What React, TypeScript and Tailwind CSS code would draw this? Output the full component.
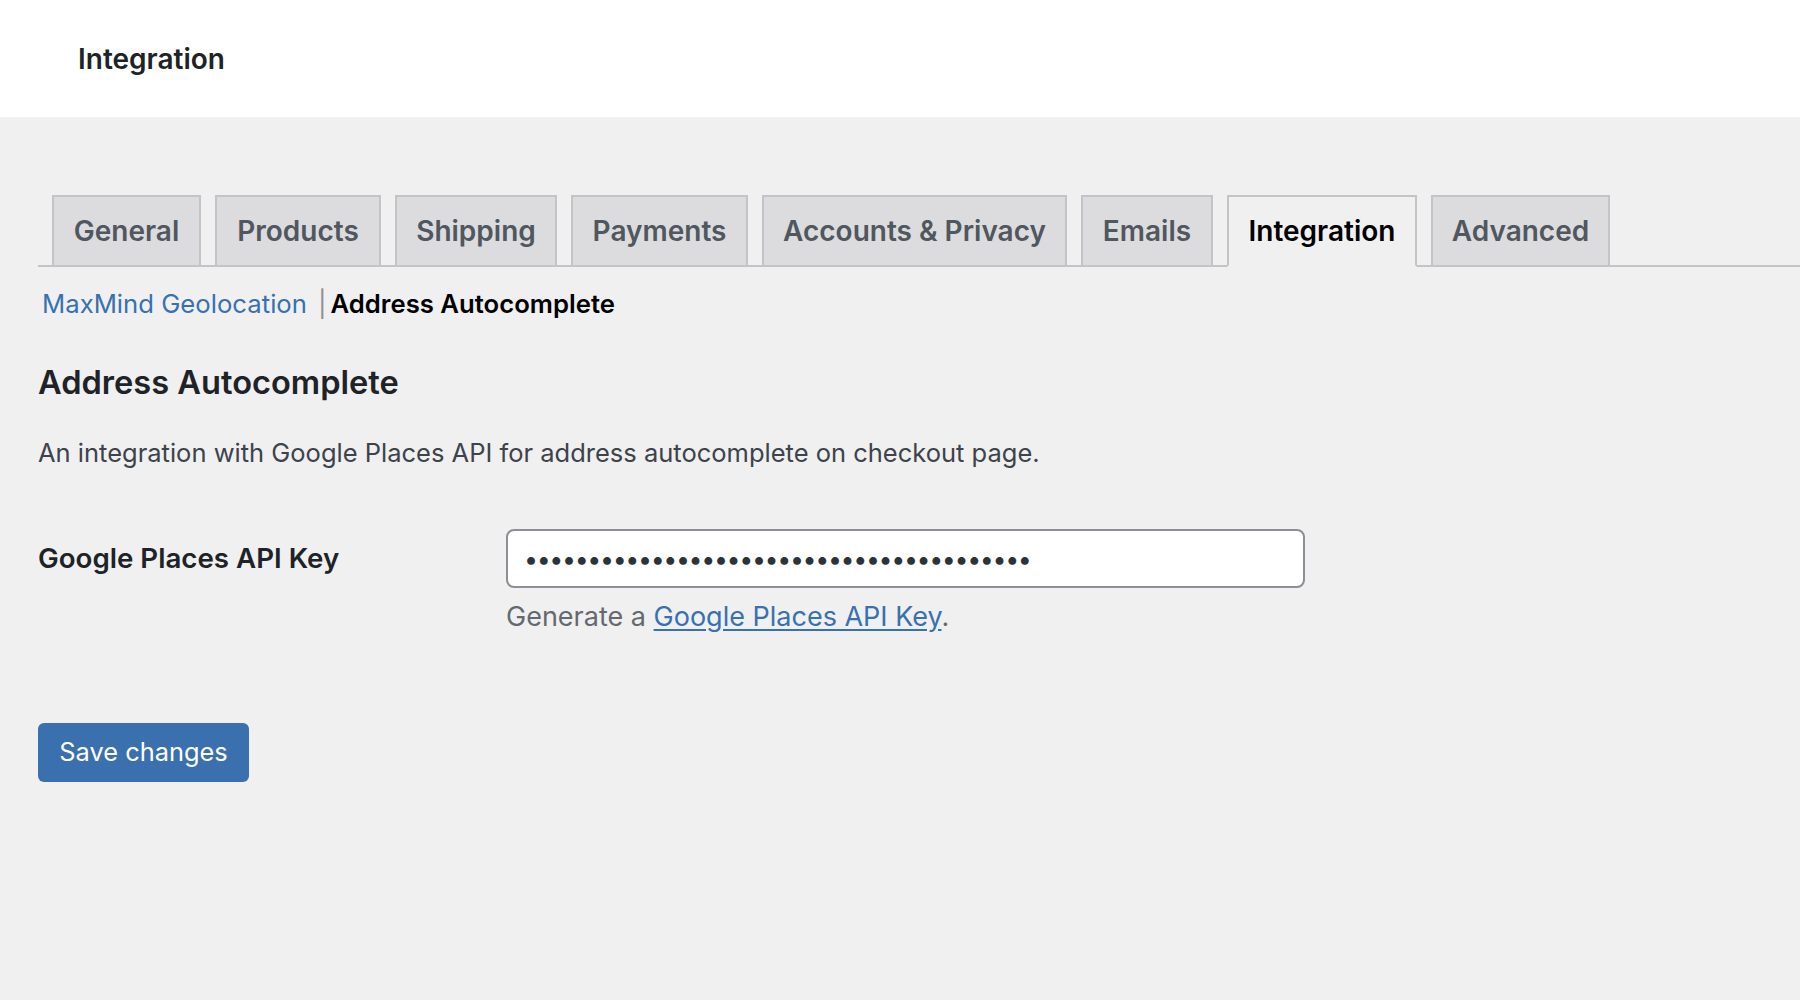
import { useState } from 'react'

const tabs = [
  { label: 'General', width: 149 },
  { label: 'Products', width: 166 },
  { label: 'Shipping', width: 162 },
  { label: 'Payments', width: 177 },
  { label: 'Accounts & Privacy', width: 305 },
  { label: 'Emails', width: 132 },
  { label: 'Integration', width: 190 },
  { label: 'Advanced', width: 179 },
]

export default function App() {
  const [apiKey, setApiKey] = useState('AIzaSyB3x9kLmQ2vR7tW1nP8cD4fG6hJ0sZqXyEa')
  const active = 'Integration'

  return (
    <div className="min-h-screen bg-[#f0f0f1] font-['Inter','Liberation_Sans',sans-serif]">
      <header className="h-[117px] bg-white flex items-center pl-[78px]">
        <h1 className="text-[28px] font-semibold text-[#1d2327]">Integration</h1>
      </header>

      <div className="pl-[38px]">
        {/* settings tabs */}
        <nav className="mt-[78px] flex gap-[14px] pl-[14px] border-b-2 border-[#c3c4c7]">
          {tabs.map((tab) => {
            const isActive = tab.label === active
            return (
              <a
                key={tab.label}
                href="#"
                style={{ width: tab.width }}
                className={
                  isActive
                    ? 'h-[72px] -mb-[2px] flex items-center justify-center border-2 border-[#c3c4c7] border-b-[#f0f0f1] bg-[#f0f0f1] text-[28px] font-semibold text-black'
                    : 'h-[72px] -mb-[2px] flex items-center justify-center border-2 border-[#c3c4c7] bg-[#dcdcde] text-[28px] font-semibold text-[#50575e]'
                }
              >
                {tab.label}
              </a>
            )
          })}
        </nav>

        <div className="mt-[19px] pl-[4px] flex items-center h-[36px] text-[25.7px]">
          <a href="#" className="text-[#3871b0]">MaxMind Geolocation</a>
          <span className="ml-[11px] mr-[4px] text-[#8c8f94]">|</span>
          <span className="font-semibold text-black">Address Autocomplete</span>
        </div>

        <h2 className="mt-[40px] text-[32.6px] leading-[40px] font-semibold text-[#1d2327]">Address Autocomplete</h2>
        <p className="mt-[33px] text-[25.5px] leading-[36px] text-[#3c434a]">
          An integration with Google Places API for address autocomplete on checkout page.
        </p>

        <div className="mt-[58px] flex">
          <label htmlFor="api-key" className="w-[468px] h-[59px] flex items-center text-[27.7px] font-semibold text-[#1d2327]">
            Google Places API Key
          </label>
          <div>
            <input
              id="api-key"
              type="password"
              value={apiKey}
              onChange={(e) => setApiKey(e.target.value)}
              className="w-[799px] h-[59px] px-[16px] bg-white border-2 border-[#8c8f94] rounded-[8px] text-[25px] tracking-[-1.4px] text-[#2c3338] outline-none"
            />
            <p className="mt-[11px] text-[27px] leading-[36px] text-[#646970]">
              Generate a{' '}
              <a href="#" className="text-[#3871b0] underline underline-offset-[3px]">Google Places API Key</a>.
            </p>
          </div>
        </div>

        <button className="mt-[88px] w-[211px] h-[59px] rounded-[6px] bg-[#3a70ad] text-white text-[25.4px]">
          Save changes
        </button>
      </div>
    </div>
  )
}
